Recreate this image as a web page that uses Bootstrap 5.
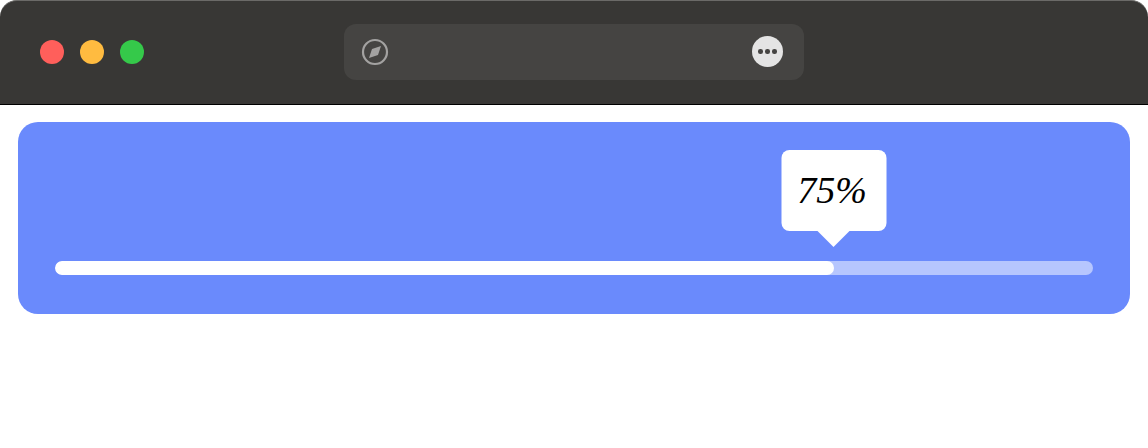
<!DOCTYPE html>
<html lang="en">
<head>
    <meta charset="UTF-8">
    <meta name="viewport" content="width=device-width, initial-scale=1.0">
    <title>Progress</title>
    <link href="https://cdn.jsdelivr.net/npm/bootstrap@5.3.0/dist/css/bootstrap.min.css" rel="stylesheet">
    <style>
        body {
            background-color: #fff;
        }
        .title-bar {
            height: 105px;
            padding: 0 40px 1px;
            background-color: #383735;
            border-top: 1px solid #6b6a68;
            border-bottom: 1px solid #000;
            border-radius: 17px 17px 0 0;
        }
        .light {
            width: 24px;
            height: 24px;
        }
        .light-red { background-color: #ff5f5b; }
        .light-yellow { background-color: #ffbb40; }
        .light-green { background-color: #35c94a; }
        .address-bar {
            left: 344px;
            top: 23px;
            width: 460px;
            height: 56px;
            padding: 0 21px 1px 17px;
            background-color: #454442;
            border-radius: 12px;
        }
        .more-btn {
            width: 31px;
            height: 31px;
            gap: 2.7px;
            background-color: #e4e4e4;
        }
        .more-btn span {
            width: 4.5px;
            height: 4.5px;
            background-color: #454442;
        }
        .panel {
            margin: 17px 18px 0;
            padding: 139px 37px 39px;
            background-color: #6a8afc;
            border-radius: 20px;
        }
        .track {
            height: 14px;
            background-color: #b6c6fe;
            border-radius: 7px;
        }
        .track .progress-bar {
            background-color: #fff;
            border-radius: 7px;
        }
        .bubble {
            left: 75%;
            bottom: 44px;
            width: 105px;
            height: 81px;
            padding-right: 3px;
            transform: translateX(-50%);
            font-family: "Liberation Serif", serif;
            font-style: italic;
            font-size: 38px;
            color: #000;
            background-color: #fff;
            border-radius: 8px;
        }
        .bubble::after {
            content: "";
            position: absolute;
            left: 50%;
            top: 100%;
            margin-left: -16px;
            border-style: solid;
            border-width: 16px 16px 0;
            border-color: #fff transparent transparent;
        }
    </style>
</head>
<body>
    <div class="title-bar position-relative d-flex align-items-center gap-3">
        <span class="light light-red rounded-circle"></span>
        <span class="light light-yellow rounded-circle"></span>
        <span class="light light-green rounded-circle"></span>
        <div class="address-bar position-absolute d-flex align-items-center justify-content-between">
            <svg width="28" height="28" viewBox="0 0 28 28" fill="none">
                <circle cx="14" cy="14" r="12" stroke="#a3a2a1" stroke-width="2.2"/>
                <path d="M20 8 L17 17 L8 20 L11 11 Z" fill="#a3a2a1"/>
            </svg>
            <div class="more-btn rounded-circle d-flex align-items-center justify-content-center">
                <span class="rounded-circle"></span>
                <span class="rounded-circle"></span>
                <span class="rounded-circle"></span>
            </div>
        </div>
    </div>

    <div class="panel">
        <div class="position-relative">
            <div class="bubble position-absolute d-flex align-items-center justify-content-center">75%</div>
            <div class="progress track">
                <div class="progress-bar" style="width: 75%"></div>
            </div>
        </div>
    </div>

    <script src="https://cdn.jsdelivr.net/npm/bootstrap@5.3.0/dist/js/bootstrap.bundle.min.js"></script>
</body>
</html>
